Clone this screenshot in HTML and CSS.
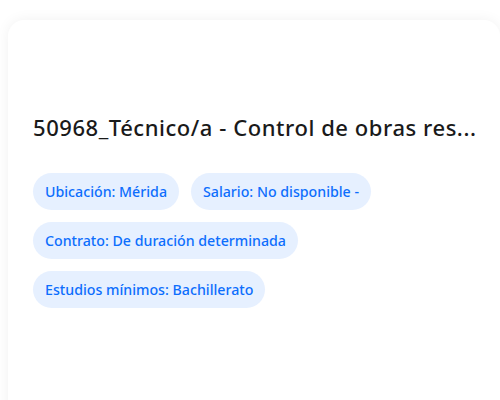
FILE: index.html
```html
<!DOCTYPE html>
<html lang="es">
<head>
<meta charset="utf-8">
<link rel="stylesheet" href="styles.css">
</head>
<body>
<div class="card">
  <h2 class="title">50968_Técnico/a - Control de obras res...</h2>
  <div class="chips">
    <span class="chip">Ubicación: Mérida</span>
    <span class="chip">Salario: No disponible -</span>
    <span class="chip">Contrato: De duración determinada</span>
    <span class="chip">Estudios mínimos: Bachillerato</span>
  </div>
</div>
</body>
</html>
```
FILE: styles.css
```css
html, body {
  margin: 0;
  padding: 0;
  background: #ffffff;
  overflow: hidden;
}
body {
  padding: 20px 0 0 8px;
  font-family: "Noto Sans", "Open Sans", sans-serif;
}
.card {
  background: #ffffff;
  border-radius: 16px;
  box-shadow: 0 0 14px rgba(0, 0, 0, 0.06);
  padding: 92px 24px 120px 25px;
  width: 443px;
}
.title {
  margin: 0 0 31px 0;
  font-size: 22px;
  font-weight: 500;
  color: #1a1a1a;
  line-height: 30px;
  letter-spacing: 0.55px;
  white-space: nowrap;
}
.chips {
  display: flex;
  flex-wrap: wrap;
  gap: 12px 12px;
  width: 360px;
}
.chip {
  display: inline-flex;
  align-items: center;
  height: 37px;
  padding: 0 12px;
  border-radius: 19px;
  background: #e6f0ff;
  color: #0d6efd;
  font-size: 14.2px;
  font-weight: 500;
}
```
